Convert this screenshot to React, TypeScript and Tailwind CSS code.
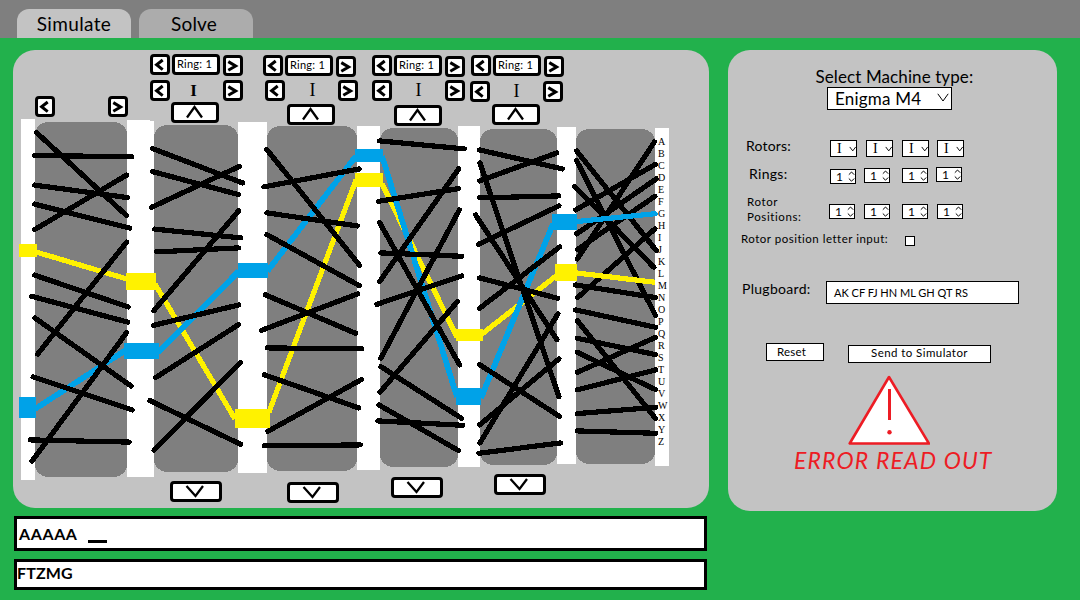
import React from "react";

type Line = [number, number, number, number];

const COLUMNS: Line[] = [
  [21, 119, 14, 361],
  [127, 121, 27, 356],
  [238, 122, 29, 351],
  [357, 126, 23, 344],
  [458, 126, 22, 341],
  [557, 127, 19, 337],
  [655, 128, 14, 338],
];

const DRUMS: Line[] = [
  [35, 122, 92, 355],
  [154, 125, 84, 347],
  [267, 126, 90, 345],
  [380, 128, 78, 339],
  [480, 129, 77, 336],
  [576, 129, 79, 335],
];

const WIRES: Line[] = [
  [36, 132, 126, 215],
  [34, 155, 131, 156],
  [34, 184.5, 127, 197],
  [34, 203.5, 129, 227.5],
  [34, 229, 126, 174.5],
  [126, 241.5, 37, 353.5],
  [34, 274.5, 127.5, 306.3],
  [31, 295.7, 127, 321.5],
  [34.5, 317.5, 130.5, 385.5],
  [32.5, 376.3, 131.5, 409.3],
  [30, 439.3, 128.5, 441.5],
  [31.5, 460.5, 126, 332],

  [152, 148, 242, 182.3],
  [152, 171, 238, 194],
  [151, 206.7, 239, 165.7],
  [154, 228.5, 240, 237.3],
  [156, 251.3, 238, 247.3],
  [238, 210.3, 153.3, 310],
  [153, 324.7, 238.3, 304.3],
  [155, 377, 238, 324],
  [149.3, 400, 240, 443.7],
  [153.3, 449.7, 239.7, 362],

  [266.3, 149, 359, 264.7],
  [263.3, 186.3, 358.7, 168.3],
  [266.3, 212.3, 356.7, 225.3],
  [266.3, 234, 358.7, 285],
  [265, 294.3, 355, 332.7],
  [261, 329.7, 357, 293.3],
  [267, 347.3, 361, 348.3],
  [264, 374.3, 358, 407.3],
  [267.3, 430.7, 360.7, 379],
  [264, 445.3, 359.7, 444.3],

  [379, 140.3, 463.7, 148.3],
  [378, 200.7, 458, 188],
  [458, 168.3, 379, 281],
  [379, 222, 459, 364.3],
  [380.3, 252.3, 461.3, 255.7],
  [458.7, 209.3, 380.3, 357.7],
  [461.3, 275.3, 376.3, 303.7],
  [457, 300.7, 379.3, 391.7],
  [380.3, 366, 461, 417.7],
  [378.3, 404.3, 458, 450],
  [377.3, 420.3, 462.3, 424.7],

  [479, 149.3, 561.7, 168.3],
  [479, 180.3, 556.3, 152.3],
  [479.3, 162.3, 558.3, 396],
  [475, 214.3, 556.3, 339],
  [479, 197.3, 558.3, 195.3],
  [478, 243.7, 558.3, 205.3],
  [559, 246.3, 479, 307.7],
  [479, 277.3, 557, 297.7],
  [557.3, 313.3, 479.3, 442.3],
  [558.3, 358.3, 479, 424.3],
  [479, 364, 558.7, 415.7],
  [478.3, 452.7, 560, 442.3],
];

const REFLECTOR_WIRES: Line[] = [
  [576, 150.3, 655.7, 250],
  [576, 160, 655, 315],
  [574.3, 186, 653.3, 266.7],
  [575, 209.3, 655, 163.7],
  [576, 233.3, 655.7, 178.3],
  [576.7, 249, 654.3, 195.7],
  [576.7, 258.3, 654, 141],
  [577, 297, 654.3, 228.3],
  [575, 284.3, 655, 297],
  [575, 309.3, 655, 326.7],
  [576.7, 320, 655, 418],
  [576.7, 337.7, 655, 354],
  [576.7, 351.7, 655, 389],
  [576.7, 371.7, 655, 336.7],
  [576.7, 389.3, 655, 369.3],
  [576.7, 413, 655, 406.7],
  [576.7, 430.3, 655, 432.7],
];

const YELLOW_PATH: Line[] = [
  [36, 252, 127, 279],
  [155, 284, 235, 419],
  [269, 412, 356, 180],
  [382, 184, 457, 337],
  [482, 334, 556, 276],
];
const BLUE_PATH: Line[] = [
  [35, 409, 126, 350],
  [158, 352.5, 239, 271],
  [267.5, 271, 356, 156],
  [382, 156, 457, 397],
  [481, 398, 553, 224],
];
const YELLOW_PADS: Line[] = [
  [19, 244, 18, 13],
  [126, 273, 30, 17],
  [235, 409, 35, 19],
  [355, 173, 28, 14],
  [456, 329, 27, 12],
  [555, 264, 22, 17],
];
const BLUE_PADS: Line[] = [
  [19, 397, 17, 21],
  [124, 343, 35, 16],
  [238, 263, 30, 15],
  [355, 149, 28, 13],
  [456, 388, 25, 17],
  [552, 214, 25, 16],
];

const LETTERS = "ABCDEFGHIJKLMNOPQRSTUVWXYZ".split("");

function Strokes({ lines }: { lines: Line[] }) {
  return (
    <>
      {lines.map(([x1, y1, x2, y2], i) => (
        <line key={i} x1={x1} y1={y1} x2={x2} y2={y2} />
      ))}
    </>
  );
}

function Rects({ rects, rx = 0, ry = 0 }: { rects: Line[]; rx?: number; ry?: number }) {
  return (
    <>
      {rects.map(([x, y, w, h], i) => (
        <rect key={i} x={x} y={y} width={w} height={h} rx={rx} ry={ry} />
      ))}
    </>
  );
}

function WiringDiagram() {
  return (
    <svg
      viewBox="13 119 696 355"
      className="block h-[355px] w-[696px] overflow-visible"
      shapeRendering="crispEdges"
      fill="none"
    >
      <g fill="#ffffff">
        <Rects rects={COLUMNS} />
        <rect x={127} y={120} width={23} height={1} />
      </g>
      <g fill="#7f7f7f">
        <Rects rects={DRUMS} rx={14} ry={12} />
      </g>
      <g strokeWidth={5.2}>
        <g stroke="#fff200">
          <Strokes lines={YELLOW_PATH} />
        </g>
        <g stroke="#00a2e8" strokeWidth={5.7}>
          <Strokes lines={BLUE_PATH} />
        </g>
        <g stroke="#000000" strokeLinecap="round" transform="translate(0.6 0.6)">
          <Strokes lines={WIRES} />
          <Strokes lines={REFLECTOR_WIRES} />
        </g>
        <line x1={577} y1={273} x2={655} y2={282.3} stroke="#fff200" />
        <line x1={577} y1={221.5} x2={655} y2={213.7} stroke="#00a2e8" strokeLinecap="round" />
      </g>
      <rect x={655} y={128} width={3} height={12} fill="#ffffff" />
      <g fill="#fff200">
        <Rects rects={YELLOW_PADS} />
      </g>
      <g fill="#00a2e8">
        <Rects rects={BLUE_PADS} />
      </g>
      <g fill="#000000" className="font-['Liberation_Serif',serif] text-[10px]">
        {LETTERS.map((c, i) => (
          <text key={c} x={658} y={145 + i * 12}>
            {c}
          </text>
        ))}
      </g>
    </svg>
  );
}

function Step({ dir, className = "" }: { dir: "prev" | "next"; className?: string }) {
  return (
    <button
      className={`h-[21px] w-5 shrink-0 rounded-[4px] border-[3px] border-black bg-white ${className}`}
    >
      <svg viewBox="3 3 14 15" className="block h-[15px] w-[14px]" fill="none" stroke="#000" strokeWidth={3}>
        <path d={dir === "prev" ? "M12.7 6 L6.6 10.8 L12.7 15.6" : "M5.3 6.6 L12.6 11 L5.3 15.2"} />
      </svg>
    </button>
  );
}

function UpButton({ className = "" }: { className?: string }) {
  return (
    <button className={`block h-[21px] w-12 shrink-0 rounded-[4px] border-[3px] border-black bg-white ${className}`}>
      <svg viewBox="3 3 42 15" className="block h-[15px] w-[42px]" fill="none" stroke="#000" strokeWidth={2.3}>
        <path d="M16 15.5 L23.5 5 L31 15.5" />
      </svg>
    </button>
  );
}

function DownButton({ className = "" }: { className?: string }) {
  return (
    <button className={`block h-[21px] w-[52px] shrink-0 rounded-[4px] border-[3px] border-black bg-white ${className}`}>
      <svg viewBox="3 3 46 15" className="block h-[15px] w-[46px]" fill="none" stroke="#000" strokeWidth={2.3}>
        <path d="M16.5 5 L25.5 15 L33 5" />
      </svg>
    </button>
  );
}

interface GroupProps {
  className: string;
  ringRow: string;
  nextRing: string;
  rotorRow: string;
  numeral: string;
  up: string;
}

function RotorControls({ className, ringRow, nextRing, rotorRow, numeral, up }: GroupProps) {
  return (
    <div className={`shrink-0 ${className}`}>
      <div className={`flex h-[21px] ${ringRow}`}>
        <Step dir="prev" />
        <div className="ml-0.5 h-[21px] w-12 shrink-0 whitespace-nowrap rounded-[4px] border-[3px] border-black bg-white pl-0.5 text-[11px] leading-[14px] tracking-[0.25px]">
          Ring: 1
        </div>
        <Step dir="next" className={`ml-[3px] ${nextRing}`} />
      </div>
      <div className={`flex h-[21px] justify-between ${rotorRow}`}>
        <Step dir="prev" />
        <span className={`font-['Liberation_Serif',serif] leading-[21px] ${numeral}`}>I</span>
        <Step dir="next" />
      </div>
      <UpButton className={up} />
    </div>
  );
}

const GROUPS: GroupProps[] = [
  {
    className: "ml-[22px] w-[93px]",
    ringRow: "-mt-px",
    nextRing: "mt-px",
    rotorRow: "mt-[5px]",
    numeral: "mr-1.5 text-[17px] font-bold",
    up: "ml-[21px] mt-px",
  },
  {
    className: "ml-5 w-[95px]",
    ringRow: "mt-0",
    nextRing: "mt-px",
    rotorRow: "mt-1 ml-0.5",
    numeral: "ml-0.5 text-[18px]",
    up: "ml-6 mt-[3px]",
  },
  {
    className: "ml-3.5 w-[93px]",
    ringRow: "mt-0",
    nextRing: "mt-px",
    rotorRow: "mt-1",
    numeral: "text-[18px]",
    up: "ml-[22px] mt-1",
  },
  {
    className: "ml-[5px] w-[93px]",
    ringRow: "mt-0 ml-px",
    nextRing: "mt-px",
    rotorRow: "mt-[5px]",
    numeral: "text-[18px]",
    up: "ml-[22px] mt-[2px]",
  },
];

function SimulatorPanel() {
  return (
    <section className="h-[458px] w-[696px] shrink-0 rounded-[22px] bg-[#c3c3c3] pt-[5px]">
      <div className="flex h-16">
        <div className="ml-[22px] mt-[41px] flex w-[93px] shrink-0 justify-between">
          <Step dir="prev" />
          <Step dir="next" />
        </div>
        {GROUPS.map((g, i) => (
          <RotorControls key={i} {...g} />
        ))}
      </div>
      <WiringDiagram />
      <div className="flex">
        <DownButton className="ml-[157px] mt-[7px]" />
        <DownButton className="ml-[65px] mt-2" />
        <DownButton className="ml-[52px] mt-[3px]" />
        <DownButton className="ml-[51px] mt-0" />
      </div>
    </section>
  );
}

function RotorSelect({ className }: { className: string }) {
  return (
    <div className={`flex h-[17px] w-[27px] shrink-0 items-center border border-black bg-white ${className}`}>
      <span className="ml-[5px] w-[7px] text-center font-['Liberation_Serif',serif] text-[14px] leading-[15px]">I</span>
      <svg viewBox="0 0 8 6" className="ml-1.5 h-1.5 w-2" fill="none" stroke="#000">
        <path d="M0.8 0.8 L4 5 L7.2 0.8" />
      </svg>
    </div>
  );
}

function Spinner({ className }: { className: string }) {
  return (
    <div className={`flex h-[15px] w-[26px] shrink-0 items-center border border-black bg-white ${className}`}>
      <span className="ml-[5px] w-2 text-[12px] leading-[13px]">1</span>
      <svg viewBox="0 0 7 11" className="ml-1 h-[11px] w-[7px]" fill="none" stroke="#000">
        <path d="M0.8 3.7 L3.5 1 L6.2 3.7 M0.8 7.5 L3.5 10.2 L6.2 7.5" />
      </svg>
    </div>
  );
}

function SettingsPanel() {
  return (
    <section className="ml-[19px] h-[461px] w-[329px] shrink-0 rounded-[22px] bg-[#c3c3c3] pt-4">
      <h2 className="ml-[87.5px] whitespace-nowrap text-[17px] leading-[22px] -mb-0.5 tracking-[0.1px]">
        Select Machine type:
      </h2>
      <div className="ml-[99px] mt-px flex h-[23px] w-[125px] items-center justify-between border border-black bg-white pl-[7px] pr-0.5">
        <span className="whitespace-nowrap text-[17px] leading-[21px] tracking-[0.2px]">Enigma M4</span>
        <svg viewBox="0 0 12 9" className="mb-0.5 h-[9px] w-3" fill="none" stroke="#000">
          <path d="M0.8 0.8 L6 8 L11.2 0.8" />
        </svg>
      </div>
      <div className="mt-[27px] flex h-5 pl-4">
        <span className="w-[86px] pl-0.5 text-[14px] leading-[18px] tracking-[0.2px]">Rotors:</span>
        <RotorSelect className="mt-[3px]" />
        <RotorSelect className="ml-[9px] mt-[3px]" />
        <RotorSelect className="ml-[9px] mt-[3px]" />
        <RotorSelect className="ml-2 mt-[3px]" />
      </div>
      <div className="mt-2 flex h-5 pl-5">
        <span className="w-[82px] pl-px text-[14px] leading-[18px] tracking-[0.3px]">Rings:</span>
        <Spinner className="mt-1" />
        <Spinner className="ml-2 mt-[3px]" />
        <Spinner className="ml-3 mt-[3px]" />
        <Spinner className="ml-2 mt-0.5" />
      </div>
      <div className="mt-[9px] flex h-[30px] pl-[19px]">
        <span className="w-[82px] text-[11.5px] leading-[15px] tracking-[0.6px]">
          Rotor
          <br />
          Positions:
        </span>
        <Spinner className="mt-2.5" />
        <Spinner className="ml-[9px] mt-2.5" />
        <Spinner className="ml-3 mt-2.5" />
        <Spinner className="ml-[9px] mt-2.5" />
      </div>
      <label className="mt-[7px] flex h-[15px] pl-[13px]">
        <span className="w-[164px] whitespace-nowrap text-[11.5px] leading-[15px] tracking-[0.5px]">
          Rotor position letter input:
        </span>
        <span className="mt-[5px] h-2.5 w-2.5 border border-black bg-white" />
      </label>
      <div className="mt-[34px] flex h-6 pl-[14px]">
        <span className="w-[84px] text-[14px] leading-[18px] tracking-[0.3px]">Plugboard:</span>
        <div className="mt-px h-[23px] w-[193px] whitespace-nowrap border border-black bg-white pl-[7px] text-[11px] leading-[22px]">
          AK CF FJ HN ML GH QT RS
        </div>
      </div>
      <div className="mt-[39px] flex h-5 pl-[38px]">
        <button className="h-[18px] w-[58px] border border-black bg-white pr-[7px] text-[11.5px] leading-4 tracking-[0.2px]">
          Reset
        </button>
        <button className="ml-6 mt-0.5 flex h-[18px] w-[143px] justify-center border border-black bg-white text-[11.5px] leading-[14px] tracking-[0.43px]">
          Send to Simulator
        </button>
      </div>
      <svg viewBox="848 375 82 71" className="ml-[120px] mt-3 block h-[71px] w-[82px]" fill="none" stroke="#ed1c24">
        <path d="M889 377 L849.7 443.5 H929 Z" fill="#fff" strokeWidth={2.6} strokeLinejoin="round" />
        <path d="M889.5 389 V420" strokeWidth={3} />
        <circle cx={889.5} cy={432.3} r={2.2} fill="#ed1c24" stroke="none" />
      </svg>
      <p className="ml-[66px] whitespace-nowrap text-[23px] italic leading-7 tracking-[1.15px] text-[#ed1c24]">
        ERROR READ OUT
      </p>
    </section>
  );
}

export default function App() {
  return (
    <div className="flex h-[600px] w-[1080px] flex-col overflow-hidden bg-[#22b14c] font-['Lato',sans-serif] text-black">
      <nav className="flex h-[38px] shrink-0 items-end gap-2 bg-[#7f7f7f] pl-[17px] text-[19px]">
        <button className="h-[29px] w-[114px] rounded-t-[12px] bg-[#c3c3c3] leading-[30px] tracking-[0.35px]">
          Simulate
        </button>
        <button className="h-[29px] w-[114px] rounded-t-[12px] bg-[#acacac] pr-1 leading-[30px] tracking-[0.2px]">
          Solve
        </button>
      </nav>
      <main className="mt-3 flex h-[461px] shrink-0 pl-[13px]">
        <SimulatorPanel />
        <SettingsPanel />
      </main>
      <div className="ml-3.5 mt-[5px] flex h-[35px] w-[693px] shrink-0 border-[3px] border-black bg-white pl-0.5 text-[16px] font-bold leading-[30px] tracking-[0.6px]">
        AAAAA
        <span className="ml-2.5 mt-[21px] h-[3px] w-[19px] bg-black" />
      </div>
      <div className="ml-3.5 mt-2 h-[31px] w-[693px] shrink-0 border-[3px] border-black bg-white text-[16px] font-bold leading-[21px] tracking-[0.15px]">
        FTZMG
      </div>
    </div>
  );
}
